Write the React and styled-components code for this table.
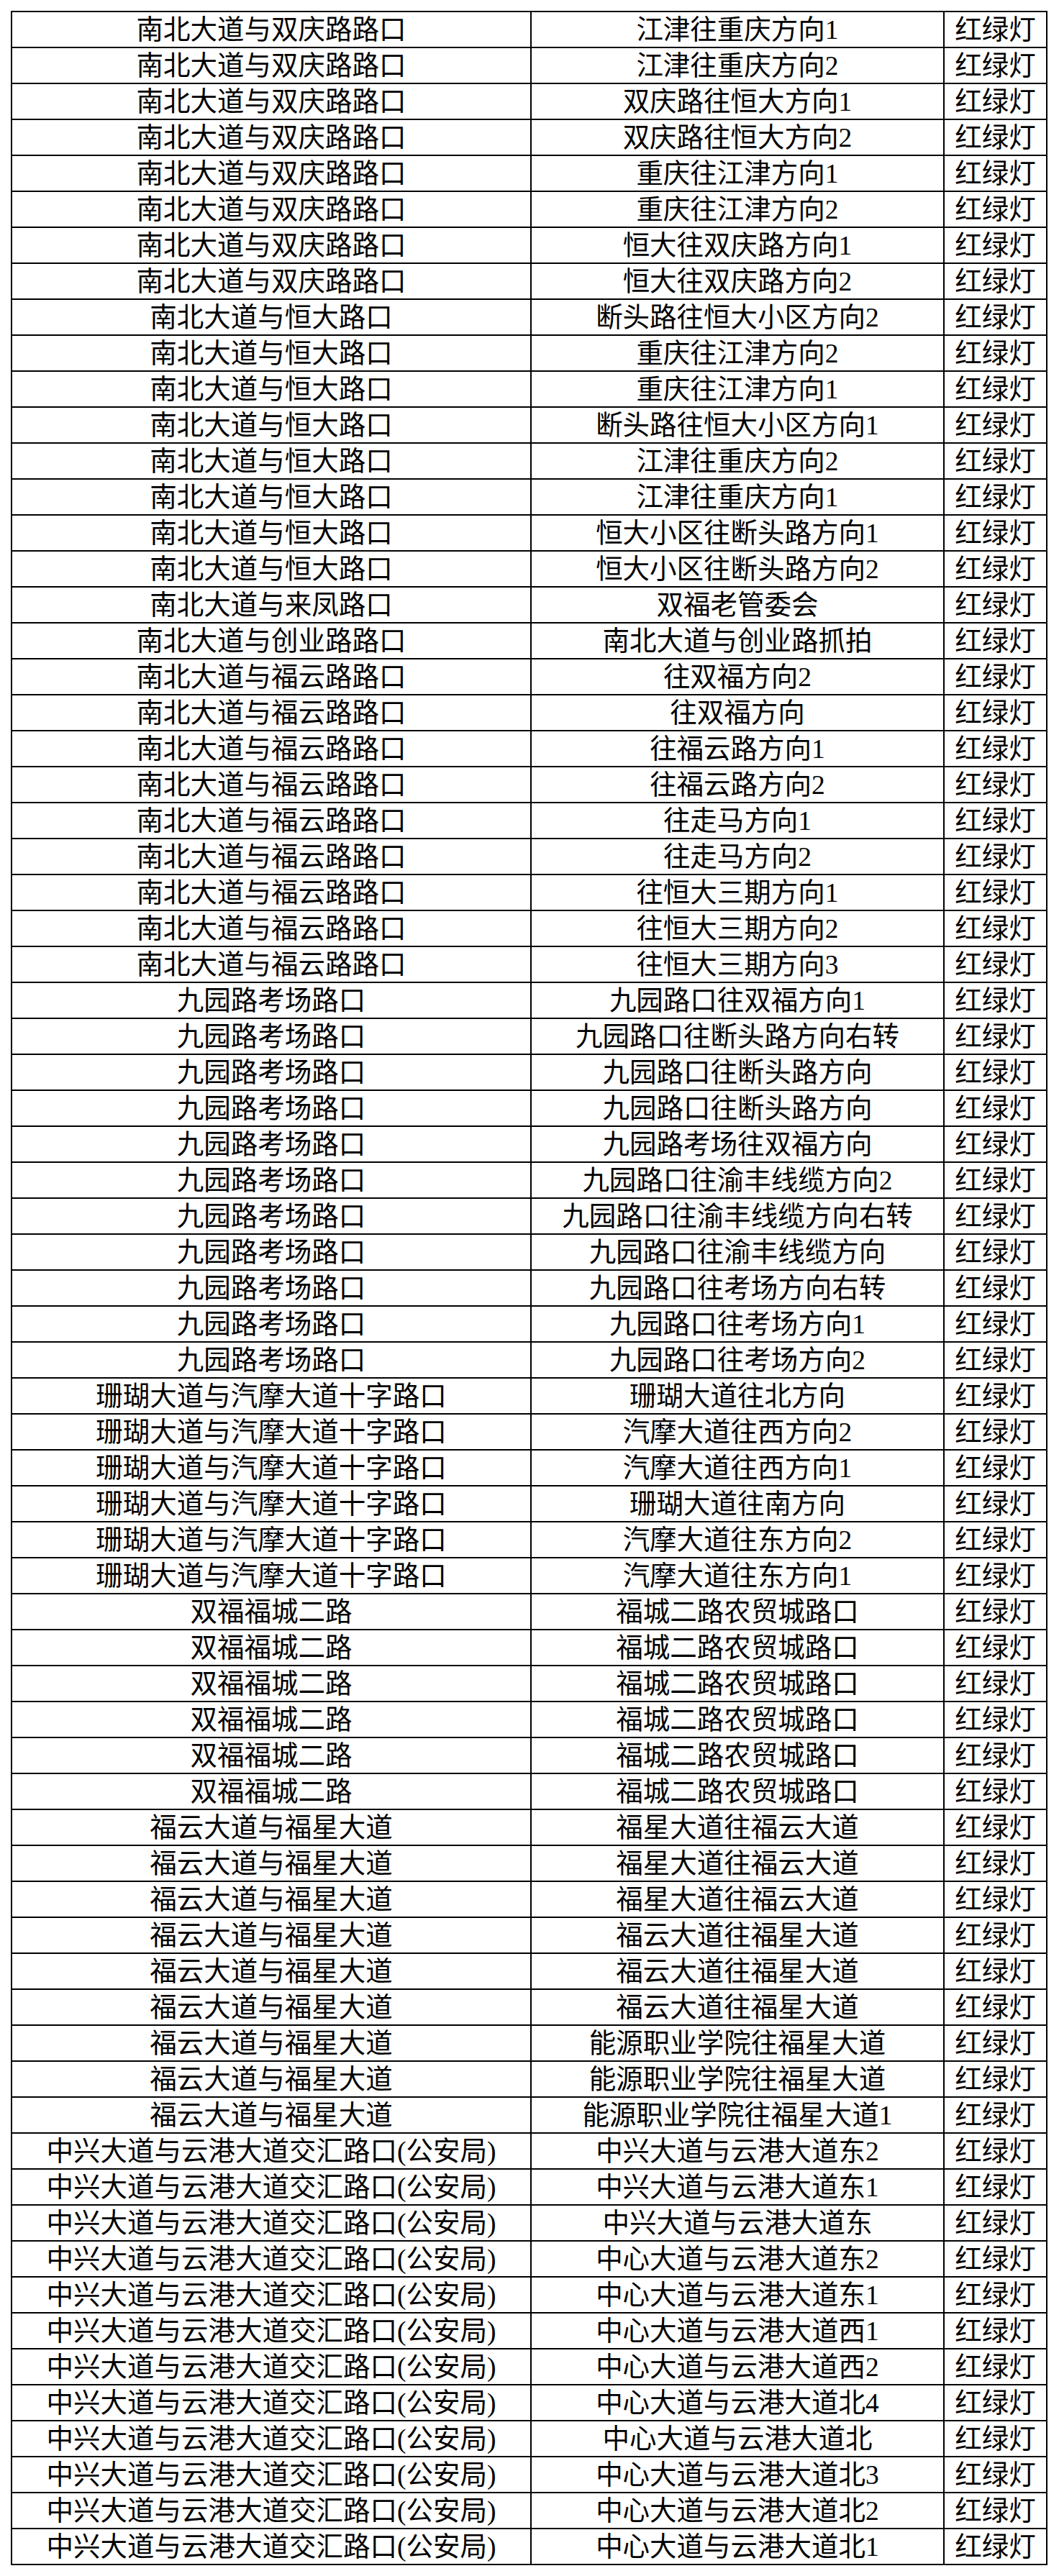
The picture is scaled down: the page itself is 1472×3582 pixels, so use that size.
import React from "react";
import styled, { createGlobalStyle } from "styled-components";

const GlobalStyle = createGlobalStyle`
  html, body {
    margin: 0;
    padding: 0;
    background: #fff;
  }
`;

const groups = [
  {
    place: "南北大道与双庆路路口",
    points: [
      "江津往重庆方向1",
      "江津往重庆方向2",
      "双庆路往恒大方向1",
      "双庆路往恒大方向2",
      "重庆往江津方向1",
      "重庆往江津方向2",
      "恒大往双庆路方向1",
      "恒大往双庆路方向2",
    ],
  },
  {
    place: "南北大道与恒大路口",
    points: [
      "断头路往恒大小区方向2",
      "重庆往江津方向2",
      "重庆往江津方向1",
      "断头路往恒大小区方向1",
      "江津往重庆方向2",
      "江津往重庆方向1",
      "恒大小区往断头路方向1",
      "恒大小区往断头路方向2",
    ],
  },
  { place: "南北大道与来凤路口", points: ["双福老管委会"] },
  { place: "南北大道与创业路路口", points: ["南北大道与创业路抓拍"] },
  {
    place: "南北大道与福云路路口",
    points: [
      "往双福方向2",
      "往双福方向",
      "往福云路方向1",
      "往福云路方向2",
      "往走马方向1",
      "往走马方向2",
      "往恒大三期方向1",
      "往恒大三期方向2",
      "往恒大三期方向3",
    ],
  },
  {
    place: "九园路考场路口",
    points: [
      "九园路口往双福方向1",
      "九园路口往断头路方向右转",
      "九园路口往断头路方向",
      "九园路口往断头路方向",
      "九园路考场往双福方向",
      "九园路口往渝丰线缆方向2",
      "九园路口往渝丰线缆方向右转",
      "九园路口往渝丰线缆方向",
      "九园路口往考场方向右转",
      "九园路口往考场方向1",
      "九园路口往考场方向2",
    ],
  },
  {
    place: "珊瑚大道与汽摩大道十字路口",
    points: [
      "珊瑚大道往北方向",
      "汽摩大道往西方向2",
      "汽摩大道往西方向1",
      "珊瑚大道往南方向",
      "汽摩大道往东方向2",
      "汽摩大道往东方向1",
    ],
  },
  {
    place: "双福福城二路",
    points: Array(6).fill("福城二路农贸城路口"),
  },
  {
    place: "福云大道与福星大道",
    points: [
      "福星大道往福云大道",
      "福星大道往福云大道",
      "福星大道往福云大道",
      "福云大道往福星大道",
      "福云大道往福星大道",
      "福云大道往福星大道",
      "能源职业学院往福星大道",
      "能源职业学院往福星大道",
      "能源职业学院往福星大道1",
    ],
  },
  {
    place: "中兴大道与云港大道交汇路口(公安局)",
    points: [
      "中兴大道与云港大道东2",
      "中兴大道与云港大道东1",
      "中兴大道与云港大道东",
      "中心大道与云港大道东2",
      "中心大道与云港大道东1",
      "中心大道与云港大道西1",
      "中心大道与云港大道西2",
      "中心大道与云港大道北4",
      "中心大道与云港大道北",
      "中心大道与云港大道北3",
      "中心大道与云港大道北2",
      "中心大道与云港大道北1",
    ],
  },
];

const rows = groups.flatMap(g => g.points.map(p => ({ place: g.place, point: p })));

const Page = styled.div`
  padding: 15px 16px 15px 15px;
  background: #fff;
`;

// 3 columns, 50px row pitch (47 + 1 padding + 2 border)
const Sheet = styled.div`
  display: grid;
  grid-template-columns: 722px 574px 143px;
  width: 1439px;
  border-top: 2px solid #000;
  border-left: 2px solid #000;
`;

const Cell = styled.div`
  box-sizing: content-box;
  height: 47px;
  line-height: 48px;
  padding-top: 1px;
  border-right: 2px solid #000;
  border-bottom: 2px solid #000;
  text-align: center;
  white-space: nowrap;
  overflow: hidden;
  color: #000;
  font-family: "Liberation Serif", "Noto Sans CJK SC", serif;
  font-size: 37.5px;
`;

export default function App() {
  return (
    <>
      <GlobalStyle />
      <Page>
        <Sheet>
          {rows.map((r, i) => (
            <React.Fragment key={i}>
              <Cell>{r.place}</Cell>
              <Cell>{r.point}</Cell>
              <Cell>红绿灯</Cell>
            </React.Fragment>
          ))}
        </Sheet>
      </Page>
    </>
  );
}
